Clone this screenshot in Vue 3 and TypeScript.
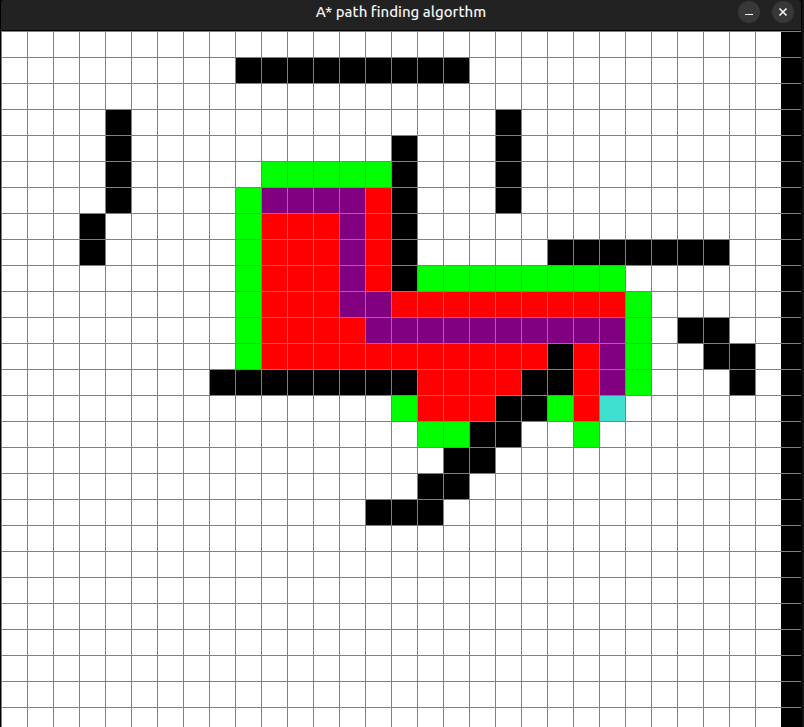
<script setup lang="ts">
type CellKind = 'empty' | 'barrier' | 'open' | 'closed' | 'path' | 'end'

const kinds: Record<string, CellKind> = {
  '.': 'empty',
  '#': 'barrier',
  o: 'open',
  x: 'closed',
  p: 'path',
  E: 'end',
}

const COLUMNS = 30
const ROWS = 30

// Each row is padded with empty cells up to COLUMNS.
const layout: string[] = [
  '',
  '.........#########',
  '',
  '....#..............#',
  '....#..........#...#',
  '....#.....ooooo#...#',
  '....#....oppppx#...#',
  '...#.....oxxxpx#',
  '...#.....oxxxpx#.....#######',
  '.........oxxxpx#oooooooo',
  '.........oxxxppxxxxxxxxxo',
  '.........oxxxxppppppppppo.##',
  '.........oxxxxxxxxxxx#xpo..##',
  '........########xxxx##xpo...#',
  '...............oxxx##oxE',
  '................oo##..o',
  '.................##',
  '................##',
  '..............###',
]

const rows: CellKind[][] = Array.from({ length: ROWS }, (_, r) =>
  (layout[r] ?? '').padEnd(COLUMNS, '.').split('').map((c) => kinds[c]),
)
</script>

<template>
  <div class="desktop">
    <main class="window">
      <header class="titlebar">
        <h1 class="title">A* path finding algorthm</h1>
        <div class="controls">
          <button class="control" type="button" aria-label="Minimize">
            <svg viewBox="0 0 22 22" width="22" height="22" aria-hidden="true">
              <path d="M7 13.5h8" stroke="#fff" stroke-width="1" />
            </svg>
          </button>
          <button class="control" type="button" aria-label="Close">
            <svg viewBox="0 0 22 22" width="22" height="22" aria-hidden="true">
              <path d="M7.5 7.5l7 7M14.5 7.5l-7 7" stroke="#f4f4f4" stroke-width="1.6" />
            </svg>
          </button>
        </div>
      </header>
      <div class="board">
        <div v-for="(row, r) in rows" :key="r" class="row">
          <span v-for="(kind, c) in row" :key="c" class="cell" :class="kind"></span>
          <span class="margin"></span>
        </div>
      </div>
    </main>
  </div>
</template>

<style>
body {
  margin: 0;
  background: #141414;
}
</style>

<style scoped>
.desktop {
  height: 100vh;
  overflow: hidden;
  padding-right: 2px;
  background: #141414;
}

.window {
  display: flex;
  flex-direction: column;
  height: 100%;
  box-sizing: border-box;
  border: solid #000;
  border-width: 0 1px;
  background: #000;
}

.titlebar {
  display: grid;
  grid-template-columns: 1fr auto 1fr;
  flex: none;
  height: 30px;
  box-sizing: border-box;
  border-radius: 3px 3px 0 0;
  background: #222;
  margin-bottom: 1px;
}

.title {
  grid-column: 2;
  margin: 0;
  color: #f5f5f5;
  font: 500 15px/24px Ubuntu, "Noto Sans", "Open Sans", sans-serif;
  white-space: nowrap;
}

.controls {
  display: flex;
  justify-content: flex-end;
  gap: 12px;
  padding: 1px 7px 0 0;
}

.control {
  width: 22px;
  height: 22px;
  padding: 0;
  border: 0;
  border-radius: 50%;
  background: #383838;
}

.control svg {
  display: block;
}

.board {
  flex: 1;
  min-height: 0;
  overflow: hidden;
}

.row {
  display: grid;
  grid-template-columns: repeat(30, 26px) 1fr;
  height: 26px;
}

.cell {
  box-sizing: border-box;
  border: solid #808080;
  border-width: 1px 0 0 1px;
}

.margin {
  border-top: 1px solid #808080;
}

.empty {
  background: #fff;
}

.barrier {
  background: #000;
}

.open {
  background: #0f0;
}

.closed {
  background: #f00;
}

.path {
  background: #800080;
}

.end {
  background: #40e0d0;
}
</style>
